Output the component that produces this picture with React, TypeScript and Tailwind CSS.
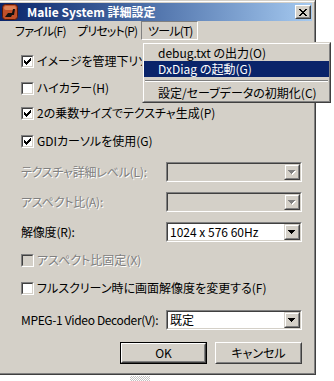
import clsx from "clsx";

const CHECK = ["......#", ".....##", "#...###", "##.###.", "#####..", ".###...", "..#...."];

const CheckMark = () => (
  <svg width="7" height="7" viewBox="0 0 7 7" shapeRendering="crispEdges">
    {CHECK.map((row, y) =>
      row.split("").map((c, x) => (c === "#" ? <rect key={`${x}-${y}`} x={x} y={y} width="1" height="1" fill="#000" /> : null))
    )}
  </svg>
);

const Checkbox = ({ checked = false, disabled = false }: { checked?: boolean; disabled?: boolean }) => (
  <span className="flex h-[13px] w-[13px] shrink-0 border border-t-[#808080] border-l-[#808080] border-b-white border-r-white">
    <span
      className={clsx(
        "flex flex-1 items-center justify-center border border-t-[#404040] border-l-[#404040] border-b-[#d4d0c8] border-r-[#d4d0c8]",
        disabled ? "bg-[#d4d0c8]" : "bg-white"
      )}
    >
      {checked && <CheckMark />}
    </span>
  </span>
);

const Arrow = ({ disabled }: { disabled?: boolean }) => (
  <svg width="8" height="5" viewBox="0 0 8 5" shapeRendering="crispEdges">
    {disabled && <polygon points="1,1 8,1 4.5,5" fill="#fff" />}
    <polygon points="0,0 7,0 3.5,4" fill={disabled ? "#808080" : "#000"} />
  </svg>
);

const Combo = ({ value = "", disabled = false }: { value?: string; disabled?: boolean }) => (
  <div className="flex h-[20px] w-[136px] shrink-0 border border-t-[#808080] border-l-[#808080] border-b-white border-r-white">
    <div
      className={clsx(
        "flex flex-1 items-center border border-t-[#404040] border-l-[#404040] border-b-[#d4d0c8] border-r-[#d4d0c8]",
        disabled ? "bg-[#d4d0c8]" : "bg-white"
      )}
    >
      <span className="flex-1 whitespace-nowrap pl-[2px] leading-[14px]">{value}</span>
      <span className="flex h-[16px] w-[16px] border border-t-[#d4d0c8] border-l-[#d4d0c8] border-b-[#404040] border-r-[#404040]">
        <span className="flex flex-1 items-center justify-center border border-t-white border-l-white border-b-[#808080] border-r-[#808080] bg-[#d4d0c8]">
          <Arrow disabled={disabled} />
        </span>
      </span>
    </div>
  </div>
);

const Button = ({ label, isDefault = false }: { label: string; isDefault?: boolean }) => (
  <div className={clsx("flex h-[22px] w-[87px]", isDefault && "border border-black")}>
    <div className="flex flex-1 border border-t-white border-l-white border-b-[#404040] border-r-[#404040]">
      <div className="flex flex-1 items-center justify-center border border-t-[#d4d0c8] border-l-[#d4d0c8] border-b-[#808080] border-r-[#808080] leading-[14px]">
        {label}
      </div>
    </div>
  </div>
);

const CheckRow = ({ label, checked, disabled, mt }: { label: string; checked?: boolean; disabled?: boolean; mt: string }) => (
  <div className={clsx("flex h-[14px] items-center", mt)}>
    <Checkbox checked={checked} disabled={disabled} />
    <span
      className={clsx(
        "ml-[3px] whitespace-nowrap leading-[14px]",
        disabled && "text-[#808080] [text-shadow:1px_1px_0_#fff]"
      )}
    >
      {label}
    </span>
  </div>
);

const ComboRow = ({ label, value, disabled, mt, tight }: { label: string; value?: string; disabled?: boolean; mt: string; tight?: boolean }) => (
  <div className={clsx("flex h-[20px] items-center justify-between", mt)}>
    <span
      className={clsx(
        "whitespace-nowrap leading-[14px]",
        tight ? "tracking-[-0.35px]" : "tracking-[-0.2px]",
        disabled && "text-[#808080] [text-shadow:1px_1px_0_#fff]"
      )}
    >
      {label}
    </span>
    <Combo value={value} disabled={disabled} />
  </div>
);

const TitleIcon = () => (
  <svg width="16" height="16" viewBox="0 0 16 16">
    <rect x="0.5" y="0.5" width="15" height="15" rx="3" fill="#c0502a" stroke="#5a1a08" />
    <rect x="2" y="2" width="12" height="4" rx="2" fill="#e8946a" opacity="0.7" />
    <path d="M3 13 L6 9 L10 9 L11 5 L13 5 L12 11 L10 11 L9 13 Z" fill="#111" />
  </svg>
);

const CloseGlyph = () => (
  <svg width="8" height="7" viewBox="0 0 8 7" shapeRendering="crispEdges">
    <path d="M0 0h2v1h-2zM6 0h2v1h-2zM1 1h2v1h-2zM5 1h2v1h-2zM2 2h4v1h-4zM3 3h2v1h-2zM2 4h4v1h-4zM1 5h2v1h-2zM5 5h2v1h-2zM0 6h2v1h-2zM6 6h2v1h-2z" fill="#000" />
  </svg>
);

export default function App() {
  return (
    <div className="relative h-[381px] w-[334px] overflow-hidden bg-white font-['Noto_Sans_CJK_JP','Noto_Sans_CJK_SC',sans-serif] text-[12px] text-black [font-feature-settings:'palt']">
      {/* dialog */}
      <div className="flex h-[375px] w-[316px] flex-col border-r border-b border-[#404040] bg-[#d4d0c8] pt-[1px]">
        <div className="flex flex-1 flex-col border-t border-r border-b border-t-white border-r-[#808080] border-b-[#808080] pt-[1px] pr-[2px]">
          {/* title bar */}
          <div className="flex h-[18px] items-center bg-linear-to-r from-[#0a246a] to-[#a6caf0] pl-[2px] pr-[1px]">
            <TitleIcon />
            <span className="ml-[9px] flex-1 whitespace-nowrap text-[12px] font-bold leading-[14px] text-white">
              Malie System 詳細設定
            </span>
            <span className="flex h-[14px] w-[16px] border border-t-white border-l-white border-b-[#404040] border-r-[#404040]">
              <span className="flex flex-1 items-center justify-center border border-t-[#d4d0c8] border-l-[#d4d0c8] border-b-[#808080] border-r-[#808080] bg-[#d4d0c8]">
                <CloseGlyph />
              </span>
            </span>
          </div>

          {/* menu bar */}
          <div className="flex h-[19px] items-center pl-[9px] tracking-[-0.8px]">
            <span className="w-[62px] whitespace-nowrap pl-[6px] leading-[14px]">ファイル(F)</span>
            <span className="w-[70px] whitespace-nowrap pl-[6px] leading-[14px]">プリセット(P)</span>
            <span className="flex h-[19px] w-[57px] items-center whitespace-nowrap border border-t-[#808080] border-l-[#808080] border-b-white border-r-white pl-[6px] leading-[14px]">
              ツール(T)
            </span>
          </div>

          {/* client */}
          <div className="flex flex-1 flex-col pl-[21px] pr-[10px]">
            <CheckRow mt="mt-[14px]" checked label="イメージを管理下リソースで作成(M)" />
            <CheckRow mt="mt-[13px]" label="ハイカラー(H)" />
            <CheckRow mt="mt-[11px]" checked label="2の乗数サイズでテクスチャ生成(P)" />
            <CheckRow mt="mt-[14px]" checked label="GDIカーソルを使用(G)" />

            <ComboRow mt="mt-[14px]" disabled label="テクスチャ詳細レベル(L):" />
            <ComboRow mt="mt-[10px]" disabled label="アスペクト比(A):" />
            <ComboRow mt="mt-[10px]" label="解像度(R):" value="1024 x 576 60Hz" />

            <CheckRow mt="mt-[11px]" disabled label="アスペクト比固定(X)" />
            <CheckRow mt="mt-[14px]" label="フルスクリーン時に画面解像度を変更する(F)" />

            <ComboRow mt="mt-[15px]" tight label="MPEG-1 Video Decoder(V):" value="既定" />

            <div className="mt-[12px] flex justify-end gap-[8px]">
              <Button label="OK" isDefault />
              <Button label="キャンセル" />
            </div>
          </div>
        </div>
      </div>

      {/* dropped down ツール menu */}
      <div className="absolute top-[42px] left-[142px] flex w-[189px] flex-col border border-t-[#d4d0c8] border-l-[#d4d0c8] border-b-[#404040] border-r-[#404040] bg-[#d4d0c8]">
        <div className="flex flex-col border border-t-white border-l-white border-b-[#808080] border-r-[#808080] pt-[1px]">
          <div className="flex h-[16px] items-center whitespace-nowrap pl-[14px] leading-[14px]">debug.txt の出力(O)</div>
          <div className="flex h-[16px] items-center whitespace-nowrap bg-[#0a246a] pl-[14px] leading-[14px] text-white">DxDiag の起動(G)</div>
          <div className="flex h-[8px] items-center px-[1px]">
            <div className="h-[2px] flex-1 border-t border-b border-t-[#808080] border-b-white" />
          </div>
          <div className="flex h-[16px] items-center whitespace-nowrap pl-[14px] leading-[14px]">設定/セーブデータの初期化(C)</div>
        </div>
      </div>

      <div className="absolute top-[376px] left-[130px] h-[5px] w-[20px] bg-[repeating-conic-gradient(#c4c4c4_0_25%,#ffffff_0_50%)] bg-[length:2px_2px]" />
    </div>
  );
}
